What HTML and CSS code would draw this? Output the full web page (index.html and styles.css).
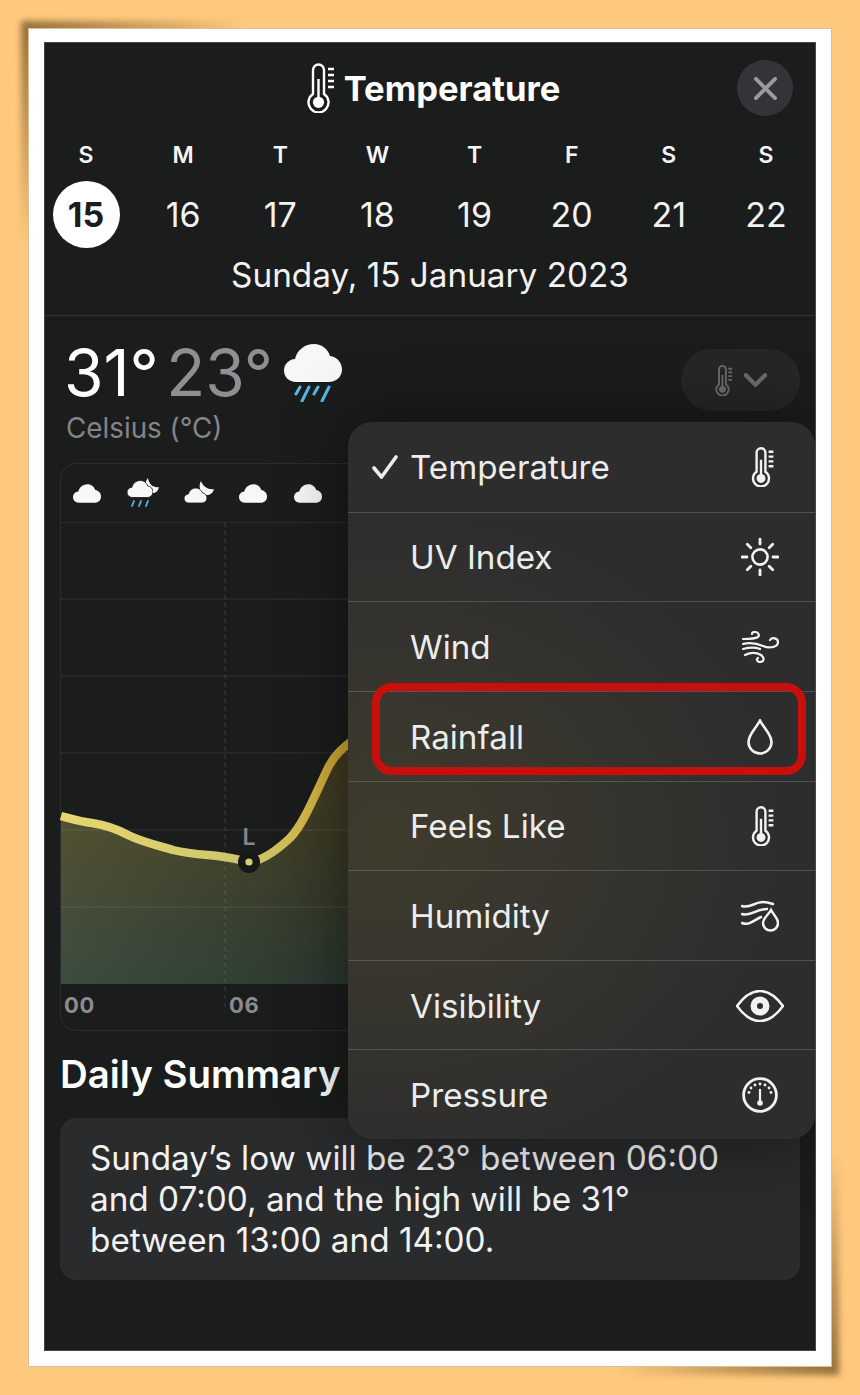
FILE: index.html
```html
<!DOCTYPE html>
<html lang="en">
<head>
  <meta charset="UTF-8" />
  <meta name="viewport" content="width=device-width, initial-scale=1" />
  <title>Temperature</title>
  <link rel="stylesheet" href="styles.css">
</head>
<body>

<svg class="sprites" aria-hidden="true">
  <symbol id="thermo" viewBox="0 0 28 50">
    <path class="sw" d="M6 31V7a5.5 5.5 0 0 1 11 0V31a10 10 0 1 1-11 0Z" fill="none" stroke="currentColor"/>
    <path class="sw" d="M11.5 16V38" stroke="currentColor"/>
    <circle cx="11.5" cy="39.3" r="5.6" fill="currentColor"/>
    <path class="sw" d="M21 6h6M21 12h6M21 18h6M21 24h6" stroke="currentColor"/>
  </symbol>
  <symbol id="cloud" viewBox="0 0 58 38">
    <path d="M12 38C5 38 0 33 0 26.5 0 20 5 15.5 11 15 13 6 21 0 30 0 38 0 44 5 46 12 53 13 58 18.5 58 25.5 58 33 52 38 45 38Z" fill="currentColor"/>
  </symbol>
  <symbol id="sun" viewBox="0 0 38 38">
    <circle cx="19" cy="19" r="7.6" fill="none" stroke="currentColor" stroke-width="2.6"/>
    <path d="M19 1v5M19 32v5M1 19h5M32 19h5M6.3 6.3l3.5 3.5M28.2 28.2l3.5 3.5M6.3 31.7l3.5-3.5M28.2 9.8l3.5-3.5" stroke="currentColor" stroke-width="2.8" stroke-linecap="round"/>
  </symbol>
  <symbol id="wind" viewBox="0 0 37 32">
    <g fill="none" stroke="currentColor" stroke-width="2.2" stroke-linecap="round">
      <path d="M1 8C8 8 13 8 16 6 18 4 16 1 13 1 11 1 10 2 10 3"/>
      <path d="M1 13C9 11 14 12 21 15 28 18 36 16 36 11 36 7 30 6 28 9"/>
      <path d="M1 18C8 16 13 16 18 18"/>
      <path d="M3 24C9 21 14 21 19 24 23 27 22 31 18 31 15 31 14 28 16 27"/>
    </g>
  </symbol>
  <symbol id="drop" viewBox="0 0 26 36">
    <path d="M13 1.5C16 8 24.5 15 24.5 23A11.5 11.5 0 0 1 1.5 23C1.5 15 10 8 13 1.5Z" fill="none" stroke="currentColor" stroke-width="2.6"/>
  </symbol>
  <symbol id="humidity" viewBox="0 0 38 32">
    <g fill="none" stroke="currentColor" stroke-width="2.5" stroke-linecap="round">
      <path d="M1 6C8 9 14 2 22 2 25 2 29 3 32 4"/>
      <path d="M1 14C8 17 15 9 26 9"/>
      <path d="M1 23C8 26 13 20 20 17"/>
      <path d="M30 10C32 14 37 18 37 23A7.5 7.5 0 0 1 22 23C22 18 28 14 30 10Z"/>
    </g>
  </symbol>
  <symbol id="eye" viewBox="0 0 48 32">
    <path d="M1 16C9 5 16 1 24 1 32 1 39 5 47 16 39 27 32 31 24 31 16 31 9 27 1 16Z" fill="none" stroke="currentColor" stroke-width="2.6"/>
    <path d="M24 6.5a9.5 9.5 0 1 0 0 19 9.5 9.5 0 0 0 0-19Zm0 6.5a3 3 0 1 1 0 6 3 3 0 0 1 0-6Z" fill="currentColor" fill-rule="evenodd"/>
  </symbol>
  <symbol id="gauge" viewBox="0 0 36 36">
    <circle cx="18" cy="18" r="16.4" fill="none" stroke="currentColor" stroke-width="2.8"/>
    <path d="M18 12V26" stroke="currentColor" stroke-width="2.2"/>
    <circle cx="18" cy="26" r="2.8" fill="currentColor"/>
    <g fill="currentColor">
      <circle cx="18" cy="7" r="1.4"/><circle cx="13" cy="8" r="1.4"/><circle cx="23" cy="8" r="1.4"/>
      <circle cx="9" cy="11" r="1.4"/><circle cx="27" cy="11" r="1.4"/><circle cx="7" cy="15.5" r="1.4"/><circle cx="29" cy="15.5" r="1.4"/>
    </g>
  </symbol>
</svg>

<div class="paper">
  <div class="screen">

    <div class="top">
      <div class="title-bar">
        <span></span>
        <h1 class="title"><svg class="title-ico"><use href="#thermo"/></svg>Temperature</h1>
        <button class="close-btn" aria-label="Close">
          <svg viewBox="0 0 24 24"><path d="M2 2L22 22M22 2L2 22" fill="none" stroke="currentColor" stroke-width="4" stroke-linecap="round"/></svg>
        </button>
      </div>

      <div class="week">
        <div class="day"><span class="letter">S</span><span class="num selected">15</span></div>
        <div class="day"><span class="letter">M</span><span class="num">16</span></div>
        <div class="day"><span class="letter">T</span><span class="num">17</span></div>
        <div class="day"><span class="letter">W</span><span class="num">18</span></div>
        <div class="day"><span class="letter">T</span><span class="num">19</span></div>
        <div class="day"><span class="letter">F</span><span class="num">20</span></div>
        <div class="day"><span class="letter">S</span><span class="num">21</span></div>
        <div class="day"><span class="letter">S</span><span class="num">22</span></div>
      </div>

      <div class="date">Sunday, 15 January 2023</div>
    </div>

    <div class="content">
      <div class="current">
        <div>
          <div class="temps">
            <span class="high">31°</span>
            <span class="low">23°</span>
            <svg class="rain-cloud" viewBox="0 0 58 58">
              <use href="#cloud" width="58" height="38" class="white"/>
              <path d="M16 43l-4 7M25 43l-7 14M34 43l-4 7M45 43l-7 14" stroke="#5bb5e8" stroke-width="3" stroke-linecap="round"/>
            </svg>
          </div>
          <div class="unit">Celsius (°C)</div>
        </div>
        <button class="metric-btn">
          <svg class="metric-ico"><use href="#thermo"/></svg>
          <svg class="chevron" viewBox="0 0 24 14"><path d="M2 2L12 12L22 2" fill="none" stroke="currentColor" stroke-width="4.4" stroke-linecap="round" stroke-linejoin="round"/></svg>
        </button>
      </div>

      <div class="chart">
        <div class="hour-icons">
          <svg viewBox="0 0 32 30"><use href="#cloud" x="2" y="6" width="28" height="19" class="white"/></svg>
          <svg viewBox="0 0 32 30">
            <path class="white-fill" d="M21 0C16 6 19 15 26 15 29 15 31 13 32 9 27 10 22 7 21 0Z"/>
            <use href="#cloud" x="0" y="2" width="26" height="18" class="white gap"/>
            <path d="M7 23l-2 5M14 23l-2 5M21 23l-2 5" stroke="#5bb5e8" stroke-width="1.8" stroke-linecap="round"/>
          </svg>
          <svg viewBox="0 0 32 30">
            <path class="white-fill" d="M19 3C16 8 18 17 25 17 28 17 31 15 32 11 27 12 21 9 19 3Z"/>
            <use href="#cloud" x="1" y="10" width="25" height="15" class="white gap"/>
          </svg>
          <svg viewBox="0 0 32 30"><use href="#cloud" x="1" y="6" width="28" height="19" class="white"/></svg>
          <svg viewBox="0 0 32 30"><use href="#cloud" x="1" y="6" width="28" height="19" class="white"/></svg>
        </div>

        <svg class="plot" viewBox="61 523 738 461">
          <defs>
            <linearGradient id="areaFill" x1="0" y1="0" x2="0" y2="1">
              <stop offset="0" stop-color="#5f5229"/>
              <stop offset="1" stop-color="#3b4c40"/>
            </linearGradient>
            <linearGradient id="areaFade" gradientUnits="userSpaceOnUse" x1="61" y1="0" x2="350" y2="0">
              <stop offset="0" stop-color="#000" stop-opacity="0"/>
              <stop offset="1" stop-color="#000" stop-opacity=".28"/>
            </linearGradient>
            <linearGradient id="lineFill" gradientUnits="userSpaceOnUse" x1="61" y1="0" x2="350" y2="0">
              <stop offset="0" stop-color="#e6d76f"/>
              <stop offset=".65" stop-color="#cdc46c"/>
              <stop offset=".85" stop-color="#d6ba4c"/>
              <stop offset="1" stop-color="#cfa62e"/>
            </linearGradient>
          </defs>
          <path d="M61 816C72 819 82 822 92 823 105 825 115 828 128 835 142 842 160 846 173 850 185 853 195 854 208 855 225 856 236 859 249 862 262 861 275 852 290 838 303 825 315 795 327 770 334 755 342 748 360 735V984H61Z" fill="url(#areaFill)"/>
          <path d="M61 816C72 819 82 822 92 823 105 825 115 828 128 835 142 842 160 846 173 850 185 853 195 854 208 855 225 856 236 859 249 862 262 861 275 852 290 838 303 825 315 795 327 770 334 755 342 748 360 735V984H61Z" fill="url(#areaFade)"/>
          <path class="grid-line" d="M61 599H800M61 676H800M61 753H800M61 830H800M61 907H800"/>
          <path class="grid-dash" d="M225 523V1012"/>
          <path d="M61 816C72 819 82 822 92 823 105 825 115 828 128 835 142 842 160 846 173 850 185 853 195 854 208 855 225 856 236 859 249 862 262 861 275 852 290 838 303 825 315 795 327 770 334 755 342 748 360 735" fill="none" stroke="url(#lineFill)" stroke-width="8.5"/>
          <circle cx="249" cy="862" r="11" fill="#17181a"/>
          <circle cx="249" cy="862" r="3.6" fill="#d8d070"/>
          <text x="249" y="845" class="low-mark">L</text>
        </svg>

        <div class="hours">
          <span>00</span>
          <span>06</span>
        </div>
      </div>

      <h2 class="summary-title">Daily Summary</h2>
      <div class="summary">Sunday’s low will be 23° between 06:00 and 07:00, and the high will be 31° between 13:00 and 14:00.</div>
    </div>

    <div class="menu">
      <div class="menu-row">
        <svg class="check" viewBox="0 0 26 24"><path d="M2 13L9.5 22L24 2" fill="none" stroke="currentColor" stroke-width="3.6" stroke-linecap="round" stroke-linejoin="round"/></svg>
        <span>Temperature</span>
        <span class="menu-ico"><svg class="i-thermo"><use href="#thermo"/></svg></span>
      </div>
      <div class="menu-row"><i></i><span>UV Index</span><span class="menu-ico"><svg class="i-sun"><use href="#sun"/></svg></span></div>
      <div class="menu-row"><i></i><span>Wind</span><span class="menu-ico"><svg class="i-wind"><use href="#wind"/></svg></span></div>
      <div class="menu-row"><i></i><span>Rainfall</span><span class="menu-ico"><svg class="i-drop"><use href="#drop"/></svg></span></div>
      <div class="menu-row"><i></i><span>Feels Like</span><span class="menu-ico"><svg class="i-thermo"><use href="#thermo"/></svg></span></div>
      <div class="menu-row"><i></i><span>Humidity</span><span class="menu-ico"><svg class="i-humidity"><use href="#humidity"/></svg></span></div>
      <div class="menu-row"><i></i><span>Visibility</span><span class="menu-ico"><svg class="i-eye"><use href="#eye"/></svg></span></div>
      <div class="menu-row"><i></i><span>Pressure</span><span class="menu-ico"><svg class="i-gauge"><use href="#gauge"/></svg></span></div>
      <div class="highlight"></div>
    </div>

  </div>
</div>

</body>
</html>
```

FILE: styles.css
```css
* { box-sizing: border-box; margin: 0; padding: 0; }

body {
  font-family: 'Inter', 'Liberation Sans', sans-serif;
  background: #fec97e;
  padding: 28px;
  height: 1395px;
  overflow: hidden;
  color: #f2f2f2;
}

.sprites { display: none; }

.sw { stroke-width: var(--sw, 2.4); }

button {
  border: none;
  font-family: inherit;
  display: flex;
  align-items: center;
  justify-content: center;
}

/* paper frame with curled corner shadows */
.paper {
  position: relative;
  height: 1339px;
  background: #fff;
  border: 1px solid #dcbf92;
  padding: 13px 15px;
}

.paper::before,
.paper::after {
  content: "";
  position: absolute;
  z-index: -1;
  width: 220px;
  height: 220px;
  filter: blur(3px);
}

.paper::before {
  left: -8px;
  top: -8px;
  background: radial-gradient(circle at 0 0, rgba(90, 62, 20, .65), rgba(90, 62, 20, 0) 72%);
}

.paper::after {
  right: -8px;
  bottom: -9px;
  background: radial-gradient(circle at 100% 100%, rgba(90, 62, 20, .65), rgba(90, 62, 20, 0) 72%);
}

.screen {
  position: relative;
  height: 1309px;
  background: #1b1c1c;
  border: 1px solid #46474b;
  overflow: hidden;
}

.top {
  height: 273px;
  padding-top: 17px;
  border-bottom: 1px solid #333437;
}

.title-bar {
  display: grid;
  grid-template-columns: 1fr auto 1fr;
  align-items: center;
  height: 56px;
  padding-right: 22px;
}

.title {
  display: flex;
  align-items: center;
  gap: 8.5px;
  font-size: 34.6px;
  font-weight: 700;
  color: #fff;
  margin-left: 29.5px;
}

.title-ico { width: 28px; height: 50px; color: #fff; }

.close-btn {
  justify-self: end;
  width: 56px;
  height: 56px;
  border-radius: 50%;
  background: #333438;
  color: #9a9a9f;
}

.close-btn svg { width: 23px; height: 23px; }

.week {
  display: flex;
  justify-content: space-between;
  margin-top: 25px;
  padding: 0 15px 0 7px;
}

.day {
  display: flex;
  flex-direction: column;
  align-items: center;
  width: 68px;
}

.letter {
  font-size: 23px;
  font-weight: 600;
  line-height: 28px;
  color: #f5f5f5;
}

.num {
  width: 67px;
  height: 67px;
  margin-top: 12px;
  padding-bottom: 1px;
  display: flex;
  align-items: center;
  justify-content: center;
  font-size: 34px;
  border-radius: 50%;
}

.num.selected {
  background: #fff;
  color: #1b1c1c;
  font-weight: 700;
}

.date {
  margin-top: 7px;
  text-align: center;
  font-size: 33.3px;
  line-height: 40px;
}

.content { padding: 0 15px; }

.current {
  display: flex;
  justify-content: space-between;
  align-items: flex-start;
}

.temps {
  display: flex;
  align-items: center;
  gap: 7.5px;
  padding-left: 4px;
  margin-top: 22px;
  height: 70px;
  font-size: 64px;
  line-height: 70px;
}

.high { color: #fff; }
.low { color: #8e8e93; }

.rain-cloud { width: 58px; height: 58px; margin-left: 3px; }

.white { color: #f7f7f7; }
.white-fill { fill: #f7f7f7; }
.gap { stroke: #1b1c1c; stroke-width: 2; }

.unit {
  padding-left: 6px;
  margin-top: 4px;
  font-size: 27.8px;
  line-height: 32px;
  color: #848489;
}

.metric-btn {
  margin-top: 33px;
  width: 119px;
  height: 62px;
  border-radius: 31px;
  background: #252627;
  color: #6b6c6d;
  gap: 11px;
}

.metric-ico { width: 18px; height: 31px; --sw: 3; }
.chevron { width: 23px; height: 14px; }

.chart {
  margin-top: 19px;
  width: 740px;
  height: 568px;
  border: 1.5px solid #2b2c2e;
  border-radius: 16px;
}

.hour-icons {
  display: flex;
  align-items: center;
  gap: 23.5px;
  height: 58.5px;
  padding-left: 10px;
  border-bottom: 1.5px solid #2b2c2e;
}

.hour-icons svg { width: 32px; height: 30px; }

.plot {
  display: block;
  width: 738px;
  height: 461px;
  overflow: visible;
}

.grid-line { fill: none; stroke: #ffffff; stroke-opacity: .07; stroke-width: 1.5; }
.grid-dash { fill: none; stroke: #ffffff; stroke-opacity: .09; stroke-width: 1.5; stroke-dasharray: 4 4; }

.low-mark {
  fill: #85858b;
  font-size: 23px;
  font-weight: 600;
  text-anchor: middle;
}

.hours {
  display: flex;
  padding: 6px 0 0 3px;
  font-size: 22px;
  font-weight: 700;
  line-height: 30px;
  letter-spacing: .6px;
  color: #8b8b91;
}

.hours span { width: 165px; }

.summary-title {
  margin-top: 21px;
  font-size: 38.4px;
  font-weight: 600;
  line-height: 44px;
  color: #fff;
}

.summary {
  margin-top: 22px;
  width: 740px;
  height: 162px;
  padding: 20px 60px 19px 30px;
  border-radius: 16px;
  background: #2a2b2d;
  font-size: 33.3px;
  line-height: 41px;
}

/* popup menu over the chart */
.menu {
  position: absolute;
  right: 0;
  top: 379px;
  width: 467px;
  height: 717px;
  display: grid;
  grid-auto-rows: 1fr;
  border-radius: 24px;
  background:
    radial-gradient(ellipse 400px 330px at 40px 58%, #3f3c2d, rgba(63, 60, 45, 0) 100%),
    #2d2d2e;
  box-shadow: 0 0 70px rgba(0, 0, 0, .45);
  font-size: 33.2px;
  color: #ececec;
}

.menu-row {
  display: grid;
  grid-template-columns: 62px 1fr 48px;
  align-items: center;
  padding-top: 1px;
  padding-right: 31px;
  border-top: 1px solid rgba(255, 255, 255, .17);
}

.menu-row:first-child { border-top: none; }

.check { width: 26px; height: 24px; margin-left: 24px; }

.menu-ico {
  display: flex;
  align-items: center;
  justify-content: center;
  color: #f2f2f2;
}

.i-thermo { width: 24px; height: 40px; margin-left: 5px; --sw: 3; }
.i-sun { width: 38px; height: 38px; }
.i-wind { width: 37px; height: 32px; }
.i-drop { width: 26px; height: 36px; }
.i-humidity { width: 38px; height: 32px; }
.i-eye { width: 48px; height: 32px; }
.i-gauge { width: 36px; height: 36px; }

.highlight {
  position: absolute;
  left: 24px;
  top: 261px;
  width: 434px;
  height: 92px;
  border: 8px solid #c90f0c;
  border-radius: 20px;
}
```
